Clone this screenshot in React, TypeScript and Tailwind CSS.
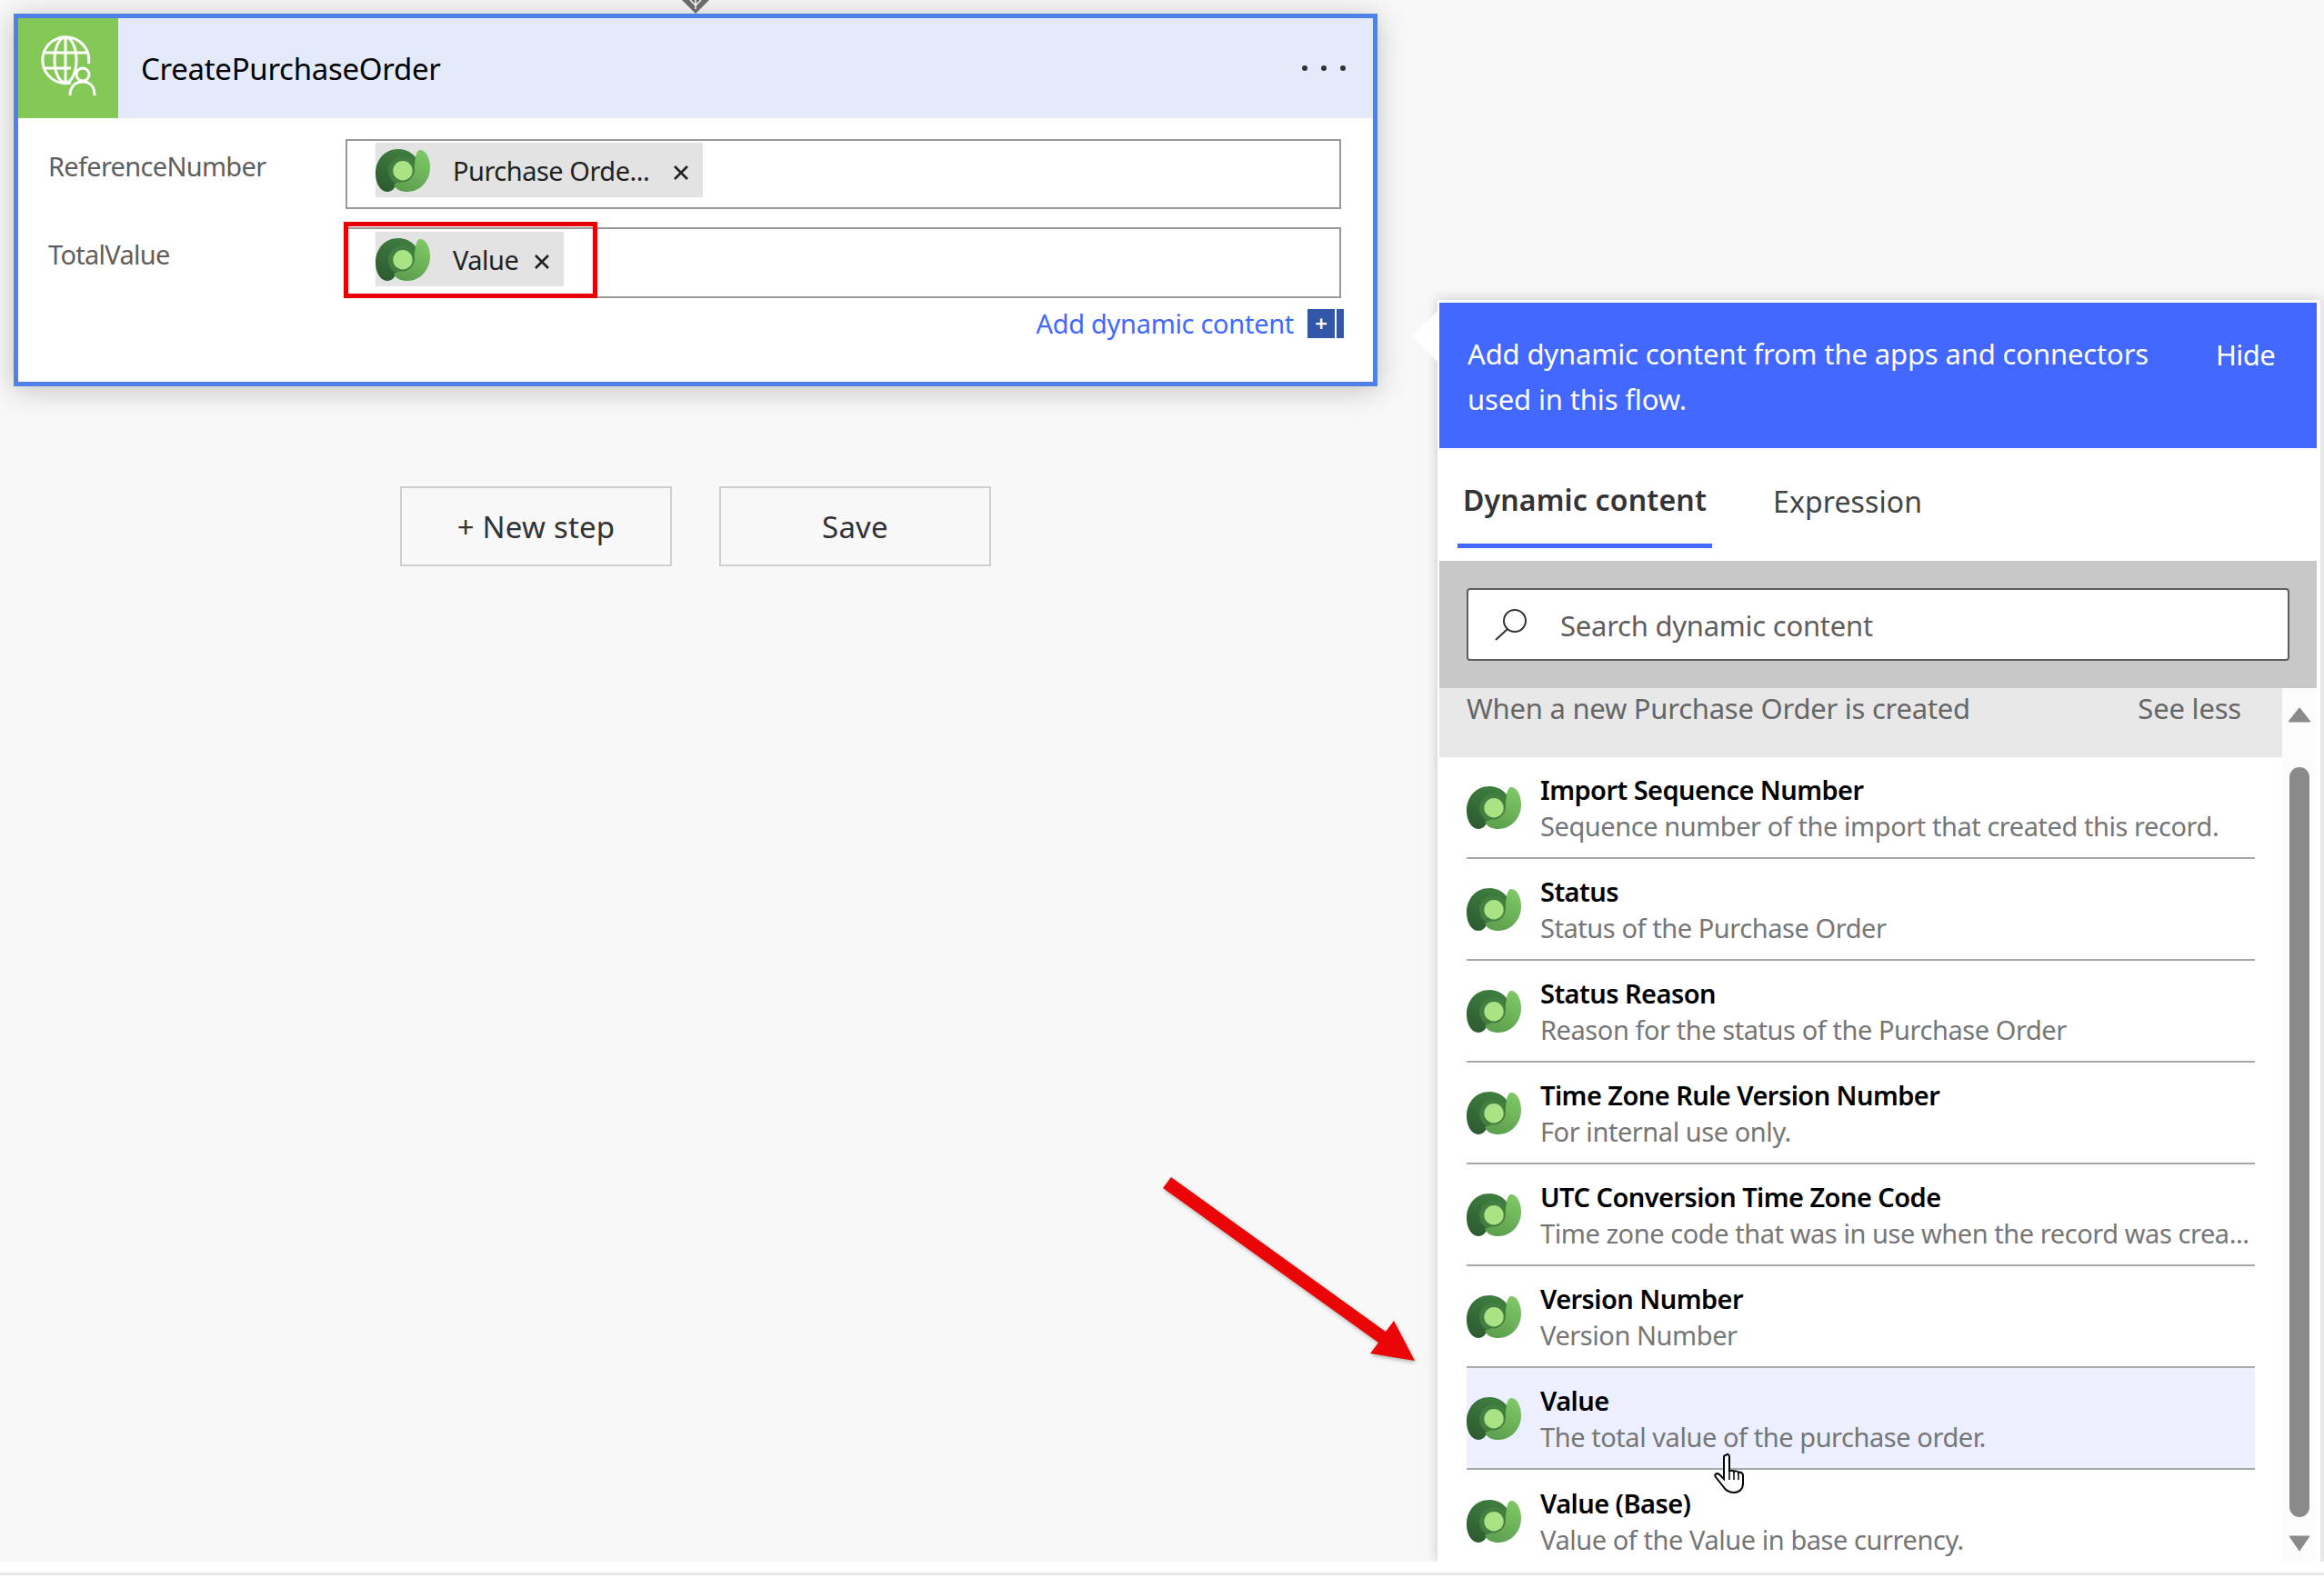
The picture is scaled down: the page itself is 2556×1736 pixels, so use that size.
const Dynamics = ({ className }: { className?: string }) => (
	<svg viewBox="0 0 60 47" className={className}>
		<defs>
			<linearGradient id="dyn-dark" x1="0.6" y1="0" x2="0.2" y2="1">
				<stop offset="0" stopColor="#3f7d3f" />
				<stop offset="1" stopColor="#2c5a30" />
			</linearGradient>
			<linearGradient id="dyn-light" x1="0.7" y1="0" x2="0.3" y2="1">
				<stop offset="0" stopColor="#7fc765" />
				<stop offset="1" stopColor="#5c9f4e" />
			</linearGradient>
		</defs>
		<path d="M13 47C5 47 0 37 0 27C0 11 11 0 25 0C35 0 42 5 46 12C44 24 30 30 24 38C21 43 18 47 13 47Z" fill="url(#dyn-dark)" />
		<circle cx="30" cy="24" r="16" fill="#437f40" />
		<path d="M49 1C55 1 60 9 60 20C60 36 48 47 35 47C28 47 23 45 20 39C24 37 27 36.500 30 36.500C37 36.500 43 30 43 22C43 14 44 1 49 1Z" fill="url(#dyn-light)" />
		<circle cx="30" cy="23.7" r="10.7" fill="#a9e384" />
	</svg>
);

const GlobeUser = () => (
	<svg viewBox="0 0 110 110" className="h-[110px] w-[110px]" fill="none" stroke="#fff" strokeWidth="3">
		<path d="M58 71A25.500 25.500 0 1 1 77.500 50" />
		<ellipse cx="52" cy="46" rx="12" ry="25" />
		<path d="M52 21V71M29 38H75M28 55H58" />
		<circle cx="71" cy="62" r="7" />
		<path d="M57 85C57 75 63 70 71 70C79 70 84 75 84 85" />
	</svg>
);

const Close = ({ className }: { className?: string }) => (
	<svg viewBox="0 0 18 18" className={className} stroke="#1f1f1f" strokeWidth="2.500">
		<path d="M2 2L16 16M16 2L2 16" />
	</svg>
);

const Chip = ({ label, width }: { label: string; width: string }) => (
	<div className={`flex h-[60px] items-center bg-[#e3e3e3] ${width}`}>
		<Dynamics className="h-[47px] w-[60px] shrink-0" />
		<span className="ml-[25px] whitespace-nowrap pt-[2px] text-[29px] tracking-[-0.5px] text-[#222]">{label}</span>
		<Close className="ml-auto mr-[15px] mt-[6px] h-[18px] w-[18px]" />
	</div>
);

const rows = [
	{ title: "Import Sequence Number", description: "Sequence number of the import that created this record." },
	{ title: "Status", description: "Status of the Purchase Order" },
	{ title: "Status Reason", description: "Reason for the status of the Purchase Order" },
	{ title: "Time Zone Rule Version Number", description: "For internal use only." },
	{ title: "UTC Conversion Time Zone Code", description: "Time zone code that was in use when the record was crea..." },
	{ title: "Version Number", description: "Version Number" },
	{ title: "Value", description: "The total value of the purchase order.", hovered: true },
	{ title: "Value (Base)", description: "Value of the Value in base currency.", last: true },
];

const ContentRow = ({
	title,
	description,
	hovered,
	last,
}: {
	title: string;
	description: string;
	hovered?: boolean;
	last?: boolean;
}) => (
	<div
		className={`flex h-[112px] shrink-0 items-center ${last ? "" : "border-b-2 border-[#a9a9a9]"} ${
			hovered ? "bg-[#ebefff]" : ""
		}`}
	>
		<Dynamics className="h-[47px] w-[60px] shrink-0" />
		<div className="ml-[21px] min-w-0 pt-[1px]">
			<div className="h-[40px] whitespace-nowrap text-[29px] leading-[40px] font-semibold tracking-[-0.55px] text-black">
				{title}
			</div>
			<div className="h-[40px] whitespace-nowrap text-[29px] leading-[40px] tracking-[-0.44px] text-[#767676]">
				{description}
			</div>
		</div>
	</div>
);

const App = () => {
	return (
		<div className="relative flex h-[1736px] w-[2556px] flex-col overflow-hidden bg-[#f8f8f8] font-['Noto_Sans','Open_Sans',sans-serif]">
			<div className="flex h-[1718px] shrink-0">
				<div className="w-[1581px] shrink-0 pl-[15px] pt-[15px]">
					<div className="h-[410px] w-[1500px] border-[5px] border-[#4f81e6] bg-white shadow-[0_4px_30px_rgba(0,0,0,0.22)]">
						<div className="flex h-[110px] items-center bg-[#e4eaf9]">
							<div className="h-[110px] w-[110px] shrink-0 bg-[#84c957]">
								<GlobeUser />
							</div>
							<span className="ml-[25px] pt-[2px] text-[33px] tracking-[-0.3px] text-black">CreatePurchaseOrder</span>
							<div className="ml-auto mr-[30px] flex gap-[15px]">
								<span className="h-[6px] w-[6px] rounded-full bg-[#333]" />
								<span className="h-[6px] w-[6px] rounded-full bg-[#333]" />
								<span className="h-[6px] w-[6px] rounded-full bg-[#333]" />
							</div>
						</div>
						<div className="pl-[33px] pr-[32px] pt-[23px]">
							<div className="flex">
								<div className="w-[327px] pt-[10px] text-[29px] leading-[40px] tracking-[-0.7px] text-[#605e5c]">
									ReferenceNumber
								</div>
								<div className="h-[77px] w-[1095px] border-2 border-[#999] pl-[31px] pt-[2px]">
									<Chip label="Purchase Orde..." width="w-[360px]" />
								</div>
							</div>
							<div className="mt-[20px] flex">
								<div className="w-[327px] pt-[10px] text-[29px] leading-[40px] tracking-[-0.7px] text-[#605e5c]">
									TotalValue
								</div>
								<div className="h-[78px] w-[1095px] border-2 border-[#999] pl-[31px] pt-[3px]">
									<Chip label="Value" width="w-[207px]" />
								</div>
							</div>
							<div className="mt-[12px] flex h-[32px] items-center justify-end">
								<span className="text-[29px] tracking-[-0.3px] text-[#4268ff]">Add dynamic content</span>
								<div className="ml-[15px] flex h-[32px] w-[40px] shrink-0">
									<div className="flex w-[30px] items-center justify-center bg-[#3257a8] text-[24px] leading-none font-semibold text-white">
										+
									</div>
									<div className="ml-[2px] w-[8px] bg-[#3257a8]" />
								</div>
							</div>
						</div>
					</div>
					<div className="ml-[425px] mt-[110px] flex gap-[52px]">
						<button className="h-[88px] w-[299px] border-2 border-[#cfcfcf] pt-[2px] text-[33px] tracking-[0.2px] text-[#333]">
							+ New step
						</button>
						<button className="h-[88px] w-[299px] border-2 border-[#cfcfcf] pt-[2px] text-[33px] tracking-[0.2px] text-[#333]">
							Save
						</button>
					</div>
				</div>
				<div className="mt-[330px] flex w-[971px] shrink-0 flex-col bg-white pb-0 pl-[2px] pr-[4px] pt-[3px] shadow-[0_0_14px_rgba(0,0,0,0.2)]">
					<div className="flex h-[160px] shrink-0 items-start bg-[#4268ff] pl-[31px] pt-[31px] text-white">
						<div className="w-[800px] text-[31px] leading-[50px] tracking-[-0.14px]">
							Add dynamic content from the apps and connectors
							<br />
							used in this flow.
						</div>
						<span className="ml-[23px] text-[31px] leading-[53px] tracking-[-0.6px]">Hide</span>
					</div>
					<div className="flex h-[124px] shrink-0 items-start pl-[20px]">
						<div className="flex h-[110px] w-[280px] items-center justify-center border-b-[5px] border-[#4268ff] pt-[8px] text-[32px] font-semibold tracking-[0.17px] text-[#333]">
							Dynamic content
						</div>
						<div className="ml-[67px] flex h-[110px] items-center pt-[8px] text-[32px] tracking-[0.1px] text-[#444]">
							Expression
						</div>
					</div>
					<div className="flex h-[140px] shrink-0 items-center bg-[#c8c8c8] px-[30px]">
						<div className="flex h-[80px] w-[905px] items-center rounded-[4px] border-2 border-[#605e5c] bg-white pl-[29px]">
							<svg viewBox="0 0 36 35" className="h-[35px] w-[36px]" fill="none" stroke="#333" strokeWidth="2">
								<circle cx="22" cy="13" r="12" />
								<path d="M14 22L1 34" />
							</svg>
							<span className="ml-[36px] pt-[2px] text-[31px] tracking-[-0.25px] text-[#605e5c]">Search dynamic content</span>
						</div>
					</div>
					<div className="flex min-h-0 flex-1">
						<div className="w-[927px] shrink-0 overflow-hidden">
							<div className="flex h-[76px] items-start justify-between bg-[#e8e8e8] pl-[30px] pr-[45px] pt-[1px]">
								<span className="text-[31px] leading-[42px] tracking-[-0.25px] text-[#666]">
									When a new Purchase Order is created
								</span>
								<span className="text-[31px] leading-[42px] tracking-[-0.2px] text-[#666]">See less</span>
							</div>
							<div className="ml-[30px] flex w-[867px] flex-col">
								{rows.map((row) => (
									<ContentRow key={row.title} {...row} />
								))}
							</div>
						</div>
						<div className="flex w-[38px] shrink-0 flex-col items-center bg-[#fcfcfc] pt-[21px]">
							<svg viewBox="0 0 24 17" className="h-[17px] w-[24px] shrink-0">
								<path d="M12 1.500L23 15.500H1Z" fill="#8a8a8a" stroke="#8a8a8a" strokeWidth="2" strokeLinejoin="round" />
							</svg>
							<div className="mt-[49px] h-[825px] w-[22px] shrink-0 rounded-full bg-[#8a8a8a]" />
							<svg viewBox="0 0 24 18" className="mt-[20px] h-[18px] w-[24px] shrink-0">
								<path d="M1 1H23L12 17Z" fill="#8a8a8a" stroke="#8a8a8a" strokeWidth="1" strokeLinejoin="round" />
							</svg>
						</div>
					</div>
				</div>
				<div className="mt-[330px] w-[4px] bg-[#e8e8e8]" />
			</div>
			<div className="flex h-[18px] shrink-0 flex-col bg-white pt-[12px]">
				<div className="h-[3px] bg-[#e8e8e8]" />
			</div>

			{/* connector into the card */}
			<svg viewBox="0 0 30 15" className="absolute left-[750px] top-0 h-[15px] w-[30px]">
				<path d="M0 0H30L15 15Z" fill="#6b6b6b" />
				<path d="M15 0V10M9 0L15 6L21 0" stroke="#f8f8f8" strokeWidth="1.500" fill="none" />
			</svg>

			{/* red highlight round the Value token */}
			<div className="absolute left-[378px] top-[244px] h-[84px] w-[279px] border-[5px] border-[#e60005]" />

			{/* callout notch on the panel */}
			<svg viewBox="0 0 28 56" className="absolute left-[1553px] top-[342px] h-[56px] w-[28px]">
				<path d="M0 28L28 0V56Z" fill="#fff" />
			</svg>

			{/* annotation arrow */}
			<svg viewBox="0 0 300 220" className="absolute left-[1270px] top-[1285px] h-[220px] w-[300px] drop-shadow-[1px_2px_2px_rgba(0,0,0,0.3)]">
				<path d="M18 10L9 22L246 192L237 204L286 212L263 168L254 180Z" fill="#ea0606" />
			</svg>

			{/* mouse pointer */}
			<svg viewBox="0 0 34 44" className="absolute left-[1885px] top-[1599px] h-[44px] w-[34px]">
				<path
					d="M13 2C15 0 17 1 17 4V20C17 19 21 18 22 20C23 19 26 19 27 21C28 20 32 21 32 24V33C32 39 28 43 22 43C16 43 13 41 10 36L2 26C0 23 3 21 6 23L11 28V4C11 3 12 2 13 2Z"
					fill="#fff"
					stroke="#000"
					strokeWidth="2"
				/>
				<path d="M17 20V29M22 20V29M27 21V29" stroke="#000" strokeWidth="1.500" />
			</svg>
		</div>
	);
};

export default App;
